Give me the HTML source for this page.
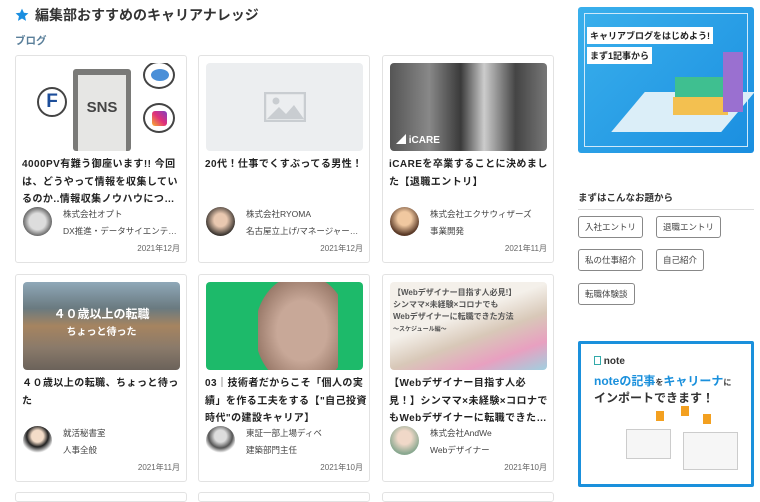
<!DOCTYPE html>
<html><head><meta charset="utf-8"><style>
*{box-sizing:border-box;margin:0;padding:0}
body{width:760px;height:494px;overflow:hidden;background:#fff;font-family:"Liberation Sans","Noto Sans CJK JP",sans-serif;color:#333;position:relative}
.abs{position:absolute}
.h1{left:15px;top:5px;font-size:14px;font-weight:bold;color:#333;display:flex;align-items:center;gap:6px}
.sub{left:15px;top:33px;font-size:10.5px;font-weight:bold;color:#5a7f9a}
.card{position:absolute;width:172px;height:208px;border:1px solid #e2e2e2;border-radius:3px;background:#fff}
.img{position:absolute;left:7px;top:7px;width:157px;height:88px;border-radius:4px;overflow:hidden}
.t{position:absolute;left:6px;top:100px;width:162px;font-size:10px;letter-spacing:0.45px;font-weight:bold;line-height:17.5px;color:#222;display:-webkit-box;-webkit-line-clamp:3;-webkit-box-orient:vertical;overflow:hidden}
.av{position:absolute;left:7px;top:151px;width:29px;height:29px;border-radius:50%}
.c{position:absolute;left:47px;top:150px;font-size:8.5px;line-height:17px;color:#444;white-space:nowrap}
.d{position:absolute;right:6px;top:187px;font-size:8px;color:#666}
.tag{position:absolute;height:22px;border:1px solid #888;border-radius:3px;font-size:8.5px;line-height:20px;padding:0 6px;color:#444}
</style></head><body>
<div class="abs h1"><svg width="14" height="14" viewBox="0 0 24 24"><path d="M12 1l3.3 7.2 7.7.8-5.8 5.2 1.7 7.8L12 18l-6.9 4 1.7-7.8L1 9l7.7-.8z" fill="#1a8ee0"/></svg>編集部おすすめのキャリアナレッジ</div>
<div class="abs sub">ブログ</div>

<div class="card" style="left:15px;top:55px">
 <div class="img" style="background:#fff">
  <div class="abs" style="left:50px;top:6px;width:58px;height:82px;background:#7a7a78;border-radius:3px"><div class="abs" style="left:5px;top:6px;width:48px;height:76px;background:#e6e6e4"></div><div class="abs" style="left:5px;top:30px;width:48px;text-align:center;font-size:15px;font-weight:bold;color:#444">SNS</div></div>
  <div class="abs" style="left:14px;top:24px;width:30px;height:30px;border:2px solid #444;border-radius:50%;background:#fff;font-size:19px;font-weight:bold;color:#1d4e9a;text-align:center;line-height:26px">F</div>
  <div class="abs" style="left:120px;top:-2px;width:32px;height:28px;border:2px solid #444;border-radius:50%;background:#fff"><div class="abs" style="left:6px;top:6px;width:18px;height:12px;background:#4a8fd8;border-radius:50%"></div></div>
  <div class="abs" style="left:120px;top:40px;width:32px;height:30px;border:2px solid #444;border-radius:50%;background:#fff"><div class="abs" style="left:7px;top:6px;width:15px;height:15px;background:linear-gradient(45deg,#f8b030,#e0307a,#8040c0);border-radius:3px"></div></div>
 </div>
 <div class="t">4000PV有難う御座います!! 今回は、どうやって情報を収集しているのか..情報収集ノウハウについ…</div>
 <div class="av" style="background:radial-gradient(#ddd 40%,#555 75%)"></div>
 <div class="c">株式会社オプト<br>DX推進・データサイエンテ…</div>
 <div class="d">2021年12月</div>
</div>

<div class="card" style="left:198px;top:55px">
 <div class="img" style="background:#eceef0"><svg class="abs" style="left:58px;top:29px" width="42" height="30" viewBox="0 0 42 30"><rect x="1" y="1" width="40" height="28" fill="none" stroke="#c9cdd1" stroke-width="2.5"/><circle cx="12" cy="9" r="3.5" fill="#c9cdd1"/><path d="M3 27L15 15l7 7 8-9 10 14z" fill="#c9cdd1"/></svg></div>
 <div class="t">20代！仕事でくすぶってる男性！</div>
 <div class="av" style="background:radial-gradient(circle at 50% 45%,#e9c8b0 30%,#3b3530 70%)"></div>
 <div class="c">株式会社RYOMA<br>名古屋立上げ/マネージャー…</div>
 <div class="d">2021年12月</div>
</div>

<div class="card" style="left:382px;top:55px">
 <div class="img" style="background:linear-gradient(90deg,#555 0%,#888 25%,#3a3a3a 45%,#ccc 60%,#444 80%,#777 100%)"><div class="abs" style="left:6px;top:68px;font-size:10px;font-weight:bold;color:#fff">◢ iCARE</div></div>
 <div class="t">iCAREを卒業することに決めました【退職エントリ】</div>
 <div class="av" style="background:radial-gradient(circle at 50% 40%,#f0c8a0 30%,#5a3a28 70%)"></div>
 <div class="c">株式会社エクサウィザーズ<br>事業開発</div>
 <div class="d">2021年11月</div>
</div>

<div class="card" style="left:15px;top:274px">
 <div class="img" style="background:linear-gradient(180deg,#8fa8b8 0%,#6a7a80 30%,#a68460 50%,#8a7a6a 75%,#6b625a 100%)"><div class="abs" style="left:0;top:24px;width:157px;text-align:center;font-size:12px;font-weight:bold;color:#fff;line-height:17px">４０歳以上の転職<br><span style="font-size:10px">ちょっと待った</span></div></div>
 <div class="t">４０歳以上の転職、ちょっと待った</div>
 <div class="av" style="background:radial-gradient(circle at 50% 35%,#f3dcc8 25%,#222 45%,#fff 70%)"></div>
 <div class="c">就活秘書室<br>人事全般</div>
 <div class="d">2021年11月</div>
</div>

<div class="card" style="left:198px;top:274px">
 <div class="img" style="background:#1dba6a"><div class="abs" style="left:52px;top:-4px;width:80px;height:96px;background:radial-gradient(ellipse at 55% 55%,#c8a898 40%,#9a7a6a 75%,transparent 76%)"></div></div>
 <div class="t">03｜技術者だからこそ「個人の実績」を作る工夫をする【"自己投資時代"の建設キャリア】</div>
 <div class="av" style="background:radial-gradient(circle at 50% 35%,#ddd 25%,#555 50%,#fff 70%)"></div>
 <div class="c">東証一部上場ディベ<br>建築部門主任</div>
 <div class="d">2021年10月</div>
</div>

<div class="card" style="left:382px;top:274px">
 <div class="img" style="background:linear-gradient(160deg,#f4f0ea 40%,#d8c8b8 60%,#e8a0c0 80%,#a0d0e0 100%)"><div class="abs" style="left:3px;top:5px;font-size:8px;font-weight:bold;color:#555;line-height:12px">【Webデザイナー目指す人必見!】<br>シンママ×未経験×コロナでも<br>Webデザイナーに転職できた方法<br><span style="font-size:6px">〜スケジュール編〜</span></div></div>
 <div class="t">【Webデザイナー目指す人必見！】シンママ×未経験×コロナでもWebデザイナーに転職できた…</div>
 <div class="av" style="background:radial-gradient(circle at 50% 40%,#f0d8c8 30%,#8aa890 70%)"></div>
 <div class="c">株式会社AndWe<br>Webデザイナー</div>
 <div class="d">2021年10月</div>
</div>

<div class="card" style="left:15px;top:492px;height:10px"></div>
<div class="card" style="left:198px;top:492px;height:10px"></div>
<div class="card" style="left:382px;top:492px;height:10px"></div>

<div class="abs" style="left:578px;top:7px;width:176px;height:146px;background:linear-gradient(135deg,#3ab0ec,#1a8ee0);border-radius:3px;overflow:hidden">
 <div class="abs" style="left:6px;top:6px;width:164px;height:134px;border:1.5px solid #cfe9fa"></div>
 <div class="abs" style="left:50px;top:85px;width:110px;height:40px;background:#dbeef8;transform:skewX(-40deg)"></div>
 <div class="abs" style="left:97px;top:70px;width:55px;height:20px;background:#3fbf90"></div>
 <div class="abs" style="left:95px;top:90px;width:55px;height:18px;background:#f3c050"></div>
 <div class="abs" style="left:145px;top:45px;width:20px;height:60px;background:#9a70d0"></div>
 <div class="abs" style="left:9px;top:20px;background:#fff;font-size:9px;font-weight:bold;padding:2px 3px;color:#222">キャリアブログをはじめよう!</div>
 <div class="abs" style="left:9px;top:40px;background:#fff;font-size:9px;font-weight:bold;padding:2px 3px;color:#222">まず1記事から</div>
</div>

<div class="abs" style="left:578px;top:190px;font-size:9.5px;font-weight:bold;color:#333">まずはこんなお題から</div>
<div class="abs" style="left:578px;top:209px;width:176px;height:1px;background:#ddd"></div>
<div class="tag" style="left:578px;top:216px">入社エントリ</div>
<div class="tag" style="left:656px;top:216px">退職エントリ</div>
<div class="tag" style="left:578px;top:249px">私の仕事紹介</div>
<div class="tag" style="left:656px;top:249px">自己紹介</div>
<div class="tag" style="left:578px;top:283px">転職体験談</div>

<div class="abs" style="left:578px;top:341px;width:176px;height:146px;border:3px solid #1a90dc;border-radius:2px;background:#fff">
 <div class="abs" style="left:13px;top:12px;font-size:10px;font-weight:bold;color:#333"><span style="display:inline-block;width:7px;height:9px;border:1.5px solid #3aa;vertical-align:-1px"></span> note</div>
 <div class="abs" style="left:13px;top:28px;font-size:12px;font-weight:bold;color:#1a90dc;white-space:nowrap">noteの記事<span style="font-size:8px;color:#333">を</span>キャリーナ<span style="font-size:8px;color:#333">に</span></div>
 <div class="abs" style="left:13px;top:45px;font-size:12px;font-weight:bold;color:#333">インポートできます！</div>
 <div class="abs" style="left:45px;top:85px;width:45px;height:30px;border:1px solid #ccc;background:#f6f6f6"></div>
 <div class="abs" style="left:102px;top:88px;width:55px;height:38px;border:1px solid #ccc;background:#f6f6f6"></div>
 <div class="abs" style="left:75px;top:67px;width:8px;height:10px;background:#f3a020"></div>
 <div class="abs" style="left:100px;top:62px;width:8px;height:10px;background:#f3a020"></div>
 <div class="abs" style="left:122px;top:70px;width:8px;height:10px;background:#f3a020"></div>
</div>
</body></html>
